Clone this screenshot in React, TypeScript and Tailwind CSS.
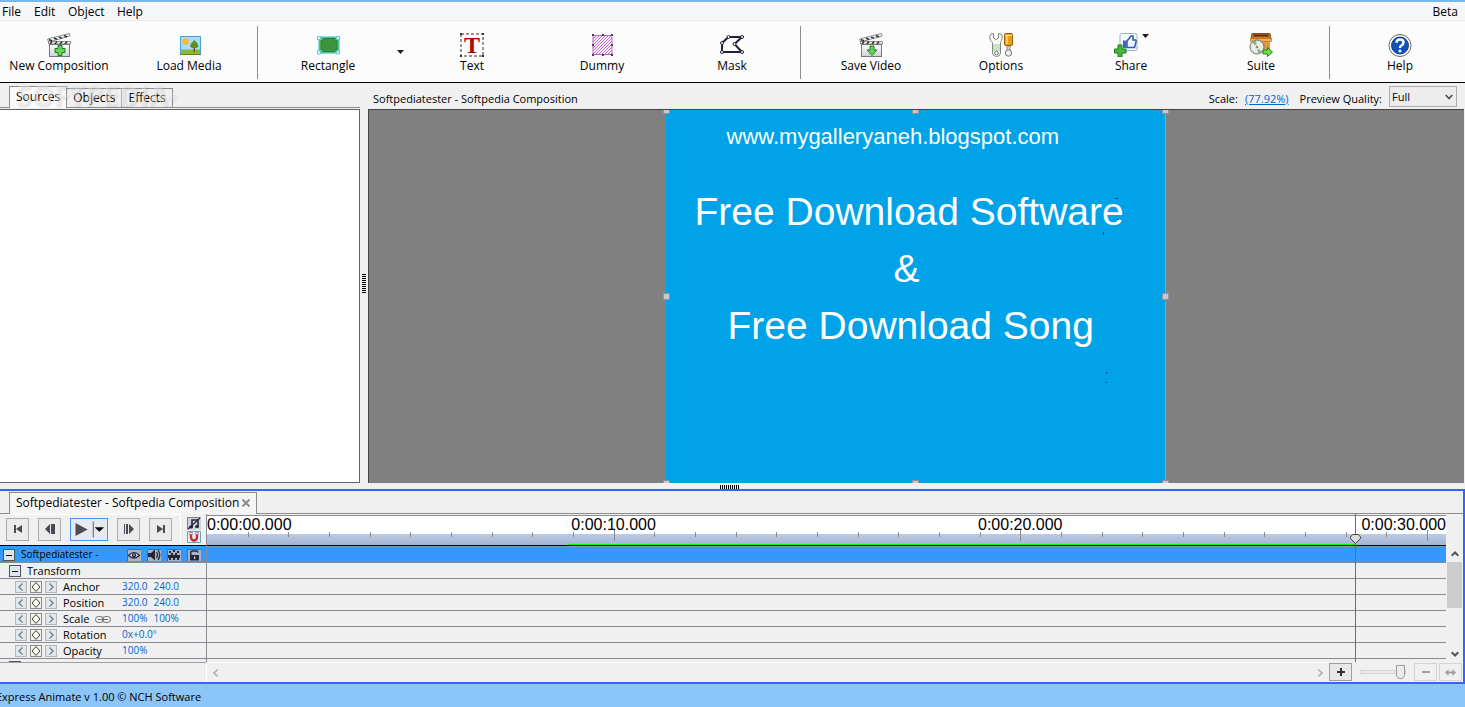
import { ReactNode, useState } from 'react'

const SECONDS_SHOWN = 30.47
const PLAYHEAD = 28.24
const RENDERED_FROM = 8.87

const properties = [
  { name: 'Anchor', values: ['320.0', '240.0'] },
  { name: 'Position', values: ['320.0', '240.0'] },
  { name: 'Scale', values: ['100%', '100%'], linked: true },
  { name: 'Rotation', values: ['0x+0.0º'] },
  { name: 'Opacity', values: ['100%'] },
]

function percent(seconds: number) {
  return (seconds / SECONDS_SHOWN) * 100 + '%'
}

export default function App() {
  return (
    <div className="flex h-screen flex-col overflow-hidden bg-[#f0f0f0] font-['Open_Sans',sans-serif] text-xs text-black">
      <MenuBar />
      <Toolbar />
      <main className="flex min-h-0 flex-1">
        <SourcesPanel />
        <div className="flex w-2 items-center justify-center">
          <Grip vertical />
        </div>
        <PreviewPanel />
      </main>
      <div className="flex h-[6px] shrink-0 items-end justify-center">
        <Grip />
      </div>
      <Timeline />
      <footer className="h-[23px] shrink-0 overflow-hidden bg-[#8cc6f9] text-[11px] leading-[26px] whitespace-nowrap">
        <p className="-ml-1">Express Animate v 1.00 © NCH Software</p>
      </footer>
    </div>
  )
}

function MenuBar() {
  return (
    <nav className="flex h-[21px] shrink-0 items-center border-t-2 border-b border-t-[#78b7ea] border-b-[#e8eaec] bg-[#f5f6f7] pt-[2px] pr-[7px] pl-[2px]">
      <button className="w-8 text-left">File</button>
      <button className="w-[34px] text-left">Edit</button>
      <button className="w-[49px] text-left">Object</button>
      <button>Help</button>
      <span className="ml-auto">Beta</span>
    </nav>
  )
}

function Toolbar() {
  return (
    <div className="flex h-[62px] shrink-0 border-b border-black bg-[#fcfcfc]">
      <Tool label="New Composition" icon={<ClapperIcon kind="add" />} first />
      <Tool label="Load Media" icon={<MediaIcon />} />
      <Separator />
      <Tool label="Rectangle" icon={<RectangleIcon />} />
      <button aria-label="More shapes" className="flex w-[14px] items-center justify-center">
        <Caret />
      </button>
      <Tool label="Text" icon={<TextIcon />} />
      <Tool label="Dummy" icon={<DummyIcon />} />
      <Tool label="Mask" icon={<MaskIcon />} />
      <Separator />
      <Tool label="Save Video" icon={<ClapperIcon kind="save" />} />
      <Tool label="Options" icon={<OptionsIcon />} />
      <Tool label="Share" icon={<ShareIcon />} />
      <Tool label="Suite" icon={<SuiteIcon />} />
      <Separator />
      <Tool label="Help" icon={<HelpIcon />} />
    </div>
  )
}

interface ToolProps {
  label: string
  icon: ReactNode
  first?: boolean
}

function Tool({ label, icon, first }: ToolProps) {
  return (
    <button
      className={
        (first ? 'w-[124px] pr-[6px]' : 'w-[130px]') +
        ' flex flex-col items-center pt-3 whitespace-nowrap'
      }
    >
      {icon}
      <span className="leading-[18px]">{label}</span>
    </button>
  )
}

function Separator() {
  return <div className="mt-[5px] mr-[5px] mb-[3px] ml-[3px] w-px bg-[#8c8c8c]" />
}

function Caret() {
  return (
    <svg width="7" height="4" viewBox="0 0 7 4">
      <path d="M0 0h7L3.5 4z" fill="#1b1b1b" />
    </svg>
  )
}

function Grip({ vertical }: { vertical?: boolean }) {
  return vertical ? (
    <div className="h-[19px] w-1 bg-[repeating-linear-gradient(to_bottom,#000_0_1px,transparent_1px_2px)]" />
  ) : (
    <div className="mr-[6px] h-[4px] w-[20px] bg-[repeating-linear-gradient(to_right,#000_0_1px,transparent_1px_2px)]" />
  )
}

function SourcesPanel() {
  const [active, setActive] = useState('Sources')

  return (
    <section className="flex w-[360px] shrink-0 flex-col">
      <div className="relative flex h-[25px] items-end border-b border-[#8c8c8c] pl-[9px]">
        {['Sources', 'Objects', 'Effects'].map((tab) => (
          <button
            key={tab}
            onClick={() => setActive(tab)}
            className={
              tab == active
                ? '-mb-px h-[22px] border border-b-0 border-[#8c8c8c] bg-[#fafafa] px-[6px] pb-px'
                : 'h-[19px] border-t border-r border-[#8c8c8c] px-[6px]'
            }
          >
            {tab}
          </button>
        ))}
        <span className="pointer-events-none absolute bottom-0 left-4 font-['Open_Sans',sans-serif] text-[28px] leading-6 font-bold text-white/40 [text-shadow:1px_1px_2px_rgba(0,0,0,0.12)]">
          SOFTPEDIA<sup className="text-[10px]">®</sup>
        </span>
      </div>
      <div className="mt-px flex-1 border border-l-0 border-[#646464] bg-white" />
    </section>
  )
}

function PreviewPanel() {
  return (
    <section className="flex min-w-0 flex-1 flex-col pr-px">
      <header className="flex h-[26px] items-end pr-[7px] pl-[5px] text-[11px] leading-5">
        <h1 className="mr-auto">Softpediatester - Softpedia Composition</h1>
        <span>Scale:</span>
        <a href="#scale" className="ml-[7px] text-[#0066cc] underline">
          (77.92%)
        </a>
        <label htmlFor="quality" className="ml-[11px]">
          Preview Quality:
        </label>
        <div className="relative mb-[2px] ml-[7px]">
          <select
            id="quality"
            className="h-[21px] w-[68px] appearance-none border border-[#acacac] bg-[#ededed] pb-px pl-[2px] text-[11px]"
          >
            <option>Full</option>
            <option>Half</option>
          </select>
          <svg className="pointer-events-none absolute top-2 right-1" width="8" height="6" viewBox="0 0 8 6">
            <path d="M0.7 1L4 4.5 7.3 1" fill="none" stroke="#555" strokeWidth="1.8" />
          </svg>
        </div>
      </header>
      <div className="flex min-h-0 flex-1 justify-center overflow-hidden border-t border-l border-[#444] bg-[#808080] pr-[2px]">
        <div className="relative -mt-px w-[500px] border-r border-[#9d9d9d] bg-[#00a2e8] font-['Liberation_Sans',sans-serif] whitespace-nowrap text-white">
          <p className="pt-3 pl-[61px] text-[22px] leading-8">www.mygalleryaneh.blogspot.com</p>
          <p className="pt-[30px] pl-[29px] text-[39px] leading-[57px]">Free Download Software</p>
          <p className="pl-[228px] text-[39px] leading-[57px]">&amp;</p>
          <p className="pl-[62px] text-[39px] leading-[57px]">Free Download Song</p>
          <Handle place="-top-[2px] -left-[3px]" />
          <Handle place="-top-[2px] left-[246px]" />
          <Handle place="-top-[2px] -right-[4px]" />
          <Handle place="top-[184px] -left-[3px]" />
          <Handle place="top-[184px] -right-[4px]" />
          <Handle place="-bottom-[4px] -left-[3px]" />
          <Handle place="-bottom-[4px] left-[246px]" />
          <Handle place="-bottom-[4px] -right-[4px]" />
          <i className="absolute top-[89px] left-[449px] h-px w-[3px] bg-[#0b3f8f]" />
          <i className="absolute top-[110px] left-[451px] h-px w-[2px] bg-[#0b3f8f]" />
          <i className="absolute top-[123px] left-[437px] h-[3px] w-px bg-[#0b3f8f]" />
          <i className="absolute top-[263px] left-[440px] h-[2px] w-px bg-[#0b3f8f]" />
          <i className="absolute top-[273px] left-[440px] h-px w-px bg-[#0b3f8f]" />
        </div>
      </div>
    </section>
  )
}

function Handle({ place }: { place: string }) {
  return <i className={place + ' absolute size-[7px] border border-[#8f93a8] bg-[#c8c8c8]'} />
}

function Timeline() {
  return (
    <section className="flex shrink-0 flex-col border-y-2 border-r-2 border-[#3264ff]">
      <div className="flex h-[23px] items-end border-b border-[#8c8c8c] pl-[9px]">
        <div className="-mb-px flex h-[22px] items-center gap-[3px] border border-b-0 border-[#8c8c8c] bg-[#f5f5f5] px-[6px] pb-px">
          <span>Softpediatester - Softpedia Composition</span>
          <button aria-label="Close tab">
            <svg width="8" height="8" viewBox="0 0 8 8">
              <path d="M0.5 0.5l7 7M7.5 0.5l-7 7" stroke="#8c8c8c" strokeWidth="2" />
            </svg>
          </button>
        </div>
      </div>

      <div className="flex h-[148px] overflow-hidden">
        <div className="w-[207px] shrink-0 border-r border-[#8a8a94]">
          <Transport />
          <LayerHeader />
          <div className="flex h-4 items-center border-b border-[#8a8a94] pt-px pl-[9px]">
            <Collapse label="Collapse transform" />
            <span className="ml-[6px] text-[11px]">Transform</span>
          </div>
          {properties.map((property) => (
            <PropertyRow key={property.name} {...property} />
          ))}
          <div className="pt-[2px] pl-[9px]">
            <Collapse label="Collapse group" />
          </div>
        </div>

        <div className="relative min-w-0 flex-1">
          <Ruler />
          <div className="h-[17px] border-b border-[#8a8a94] bg-[#3399ff] shadow-[inset_0_1px_#7a9aa8]" />
          {[1, 2, 3, 4, 5, 6].map((row) => (
            <div key={row} className="h-4 border-b border-[#8a8a94]" />
          ))}
          <div className="absolute inset-y-0 w-px bg-[#f03a1e]" style={{ left: percent(PLAYHEAD) }}>
            <svg className="absolute top-[20px] -left-[5px]" width="11" height="10" viewBox="0 0 11 10">
              <path d="M2.5 0.5h6l2 2.5v1.5l-5 5-5-5V3z" fill="#dcdcdc" stroke="#444" />
            </svg>
          </div>
        </div>

        <div className="flex w-[17px] shrink-0 flex-col items-center pt-8">
          <button aria-label="Scroll up" className="flex h-4 items-center">
            <Chevron d="M0.7 4.8L4 1.5l3.3 3.3" />
          </button>
          <div className="h-[46px] w-[15px] bg-[#cdcdcd]" />
          <button aria-label="Scroll down" className="mt-auto flex h-4 items-center">
            <Chevron d="M0.7 1.2L4 4.5l3.3-3.3" />
          </button>
        </div>
      </div>

      <div className="flex h-5 items-center">
        <div className="h-full w-[206px] shrink-0 border-t border-[#a0a0a0]" />
        <div className="flex h-full flex-1 items-center justify-between border-t border-l border-white px-[5px]">
          <button aria-label="Scroll left">
            <Arrow d="M5.5 0.7L2 4l3.5 3.3" />
          </button>
          <button aria-label="Scroll right">
            <Arrow d="M1.5 0.7L5 4 1.5 7.3" />
          </button>
        </div>
        <button
          aria-label="Zoom in"
          className="flex h-[18px] w-[23px] items-center justify-center border border-[#a0a0a0] bg-[#e8e8e8]"
        >
          <svg width="8" height="8" viewBox="0 0 8 8">
            <path d="M4 0v8M0 4h8" stroke="#333" strokeWidth="2" />
          </svg>
        </button>
        <input
          type="range"
          aria-label="Timeline zoom"
          defaultValue={100}
          className="mx-2 h-[14px] w-[46px] appearance-none bg-transparent [&::-webkit-slider-runnable-track]:h-1 [&::-webkit-slider-runnable-track]:border [&::-webkit-slider-runnable-track]:border-[#d0d4d2] [&::-webkit-slider-runnable-track]:bg-[#e7eaea] [&::-webkit-slider-thumb]:-mt-[6px] [&::-webkit-slider-thumb]:h-[14px] [&::-webkit-slider-thumb]:w-[9px] [&::-webkit-slider-thumb]:appearance-none [&::-webkit-slider-thumb]:rounded-b-[4px] [&::-webkit-slider-thumb]:border [&::-webkit-slider-thumb]:border-[#9a9a9a] [&::-webkit-slider-thumb]:bg-[#ececec]"
        />
        <button
          aria-label="Zoom out"
          className="flex h-[18px] w-[23px] items-center justify-center border border-[#d4d4d4]"
        >
          <svg width="8" height="2" viewBox="0 0 8 2">
            <path d="M0 0h8v2H0z" fill="#a0a0a0" />
          </svg>
        </button>
        <button
          aria-label="Fit timeline"
          className="mr-px ml-[2px] flex h-[18px] w-[23px] items-center justify-center border border-[#d4d4d4]"
        >
          <svg width="11" height="7" viewBox="0 0 11 7">
            <path d="M0 3.5L3.5 0v2.5h4V0L11 3.5 7.5 7V4.5h-4V7z" fill="#a0a0a0" />
          </svg>
        </button>
      </div>
    </section>
  )
}

function Chevron({ d }: { d: string }) {
  return (
    <svg width="8" height="6" viewBox="0 0 8 6">
      <path d={d} fill="none" stroke="#555" strokeWidth="2" />
    </svg>
  )
}

function Arrow({ d }: { d: string }) {
  return (
    <svg width="7" height="8" viewBox="0 0 7 8">
      <path d={d} fill="none" stroke="#b4b4b4" strokeWidth="1.8" />
    </svg>
  )
}

function Transport() {
  return (
    <div className="flex h-8 items-center border-b border-black pl-[6px]">
      <div className="flex h-full flex-1 items-center gap-[9px] border-t border-r border-white pb-[2px]">
        <TransportButton label="Go to start">
          <path d="M1 1h2v8H1zM9 1v8L3 5z" />
        </TransportButton>
        <TransportButton label="Previous frame">
          <path d="M5 0v10L0 5zM6 0h4v10H6z" />
        </TransportButton>
        <button
          aria-label="Play"
          className="flex h-[23px] w-[38px] items-center justify-between border border-[#3c9bf0] bg-[#e6eaee] pr-[2px] pl-1"
        >
          <svg width="32" height="17" viewBox="0 0 32 17">
            <path d="M0.5 1.5l13 7-13 7z" fill="#4d4d58" />
            <path d="M19.5 0v17" stroke="#555" />
            <path d="M21 6h10l-5 5z" fill="#000" />
          </svg>
        </button>
        <TransportButton label="Next frame">
          <path d="M5 0v10l5-5zM2 0h2v10H2zM0 0h1v10H0z" />
        </TransportButton>
        <TransportButton label="Go to end">
          <path d="M7 1h2v8H7zM1 1v8l6-4z" />
        </TransportButton>
      </div>
      <div className="flex w-[25px] flex-col items-center gap-px">
        <button aria-label="Mute scrubbing">
          <svg width="14" height="13" viewBox="0 0 14 13">
            <path d="M0 0h14v13H0z" fill="#cdd3d8" />
            <path d="M0.5 12.5V0.5h13" stroke="#7b8187" fill="none" />
            <path d="M5 10V3h6v6" stroke="#24243a" strokeWidth="1.6" fill="none" />
            <ellipse cx="4" cy="10" rx="2" ry="1.5" fill="#24243a" />
            <ellipse cx="10" cy="9.5" rx="2" ry="1.5" fill="#24243a" />
            <path d="M1 12L13 1" stroke="#24243a" strokeWidth="1.2" />
          </svg>
        </button>
        <button aria-label="Snap">
          <svg width="14" height="12" viewBox="0 0 14 12">
            <path d="M0.5 0.5h13v11H0.5z" fill="#dcf1fa" stroke="#6a9fc0" />
            <path d="M4 3v3.500a3 3 0 0 0 6 0V3" fill="none" stroke="#d02a2a" strokeWidth="2.4" />
            <path d="M2.8 1.500h2.4v2H2.8zM8.800 1.500h2.4v2H8.800z" fill="#fff" stroke="#a04848" strokeWidth="0.6" />
          </svg>
        </button>
      </div>
    </div>
  )
}

function TransportButton({ label, children }: { label: string; children: ReactNode }) {
  return (
    <button
      aria-label={label}
      className="flex h-[23px] w-[23px] items-center justify-center border border-[#acacac] bg-[#ebebeb]"
    >
      <svg width="10" height="10" viewBox="0 0 10 10" fill="#4a4a55">
        {children}
      </svg>
    </button>
  )
}

function LayerHeader() {
  return (
    <div className="flex h-[17px] items-center border-b border-[#8a8a94] bg-[#3399ff] pt-[2px] pl-[3px]">
      <Collapse label="Collapse layer" />
      <span className="ml-[6px] text-[10px]">Softpediatester -</span>
      <div className="mr-[5px] ml-auto flex gap-[6px]">
        <LayerButton label="Visible">
          <path d="M1.500 6.500Q7 0.500 12.500 6.500 7 11.500 1.500 6.500z" fill="#d5dde6" stroke="#24243a" strokeWidth="1.200" />
          <circle cx="7" cy="6.200" r="2.100" fill="#24243a" />
          <circle cx="7" cy="6" r="0.800" fill="#d5dde6" />
        </LayerButton>
        <LayerButton label="Audio">
          <path d="M1 4h3l4-3.5v11L4 8H1z" fill="#24243a" />
          <path d="M9.5 3q2 3 0 6M11 1q3.5 5 0 10" fill="none" stroke="#24243a" strokeWidth="1.3" />
        </LayerButton>
        <LayerButton label="Motion">
          <path
            d="M2 2h2v2H2zM6 1h2v2H6zM10 2h2v2h-2zM4 4h2v2H4zM8 4h2v2H8zM1 6h12v3H1zM2 9h2v2H2zM6 9h2v2H6zM10 9h2v2h-2z"
            fill="#24243a"
          />
        </LayerButton>
        <LayerButton label="Lock">
          <path d="M3 6h9v5.500H3z" fill="#24243a" />
          <path d="M3.700 6V3.500q0-1.500 1.500-1.500h4q1.500 0 1.500 1.500" fill="none" stroke="#24243a" strokeWidth="1.500" />
          <path d="M7 7.500h1.200v2.500H7z" fill="#d5dde6" />
        </LayerButton>
      </div>
    </div>
  )
}

function LayerButton({ label, children }: { label: string; children: ReactNode }) {
  return (
    <button aria-label={label}>
      <svg width="14" height="12" viewBox="0 0 14 12">
        <path d="M0 0h14v12H0z" fill="#a9b4c2" />
        <path d="M0.500 12V0.500H14" fill="none" stroke="#5c6677" />
        {children}
      </svg>
    </button>
  )
}

function Collapse({ label }: { label: string }) {
  return (
    <button
      aria-label={label}
      className="flex size-3 shrink-0 items-center justify-center border border-[#4a5560] bg-[#dde6ec]"
    >
      <span className="h-px w-[6px] bg-black" />
    </button>
  )
}

interface PropertyRowProps {
  name: string
  values: string[]
  linked?: boolean
}

function PropertyRow({ name, values, linked }: PropertyRowProps) {
  return (
    <div className="flex h-4 items-center border-b border-[#8a8a94] pt-px pl-[15px] text-[11px]">
      <div className="flex gap-[3px]">
        <KeyButton label={'Previous ' + name + ' keyframe'} d="M7.500 2.500L4 6l3.500 3.500" />
        <KeyButton label={'Toggle ' + name + ' keyframe'} d="M6 1.500L10 6 6 10.500 2 6z" dark />
        <KeyButton label={'Next ' + name + ' keyframe'} d="M4.500 2.500L8 6 4.500 9.500" />
      </div>
      <div className="ml-[6px] flex w-[59px] items-center gap-[6px]">
        {name}
        {linked && (
          <svg width="16" height="7" viewBox="0 0 16 7" fill="none" stroke="#6e6e6e">
            <rect x="0.500" y="0.500" width="8" height="6" rx="3" />
            <rect x="7.500" y="0.500" width="8" height="6" rx="3" />
            <path d="M3 3.500h10" />
          </svg>
        )}
      </div>
      <div className="flex gap-[6px] text-[10px] text-[#0066cc]">
        {values.map((value, index) => (
          <span key={index}>{value}</span>
        ))}
      </div>
    </div>
  )
}

function KeyButton({ label, d, dark }: { label: string; d: string; dark?: boolean }) {
  return (
    <button aria-label={label}>
      <svg width="12" height="12" viewBox="0 0 12 12">
        <rect x="0.500" y="0.500" width="11" height="11" fill={dark ? '#f4f4ee' : '#e0e8ec'} stroke={dark ? '#8a8a8a' : '#b0b8bc'} />
        <path d={d} fill="none" stroke={dark ? '#444' : '#78828a'} strokeWidth={dark ? '1' : '1.400'} />
      </svg>
    </button>
  )
}

function Ruler() {
  const ticks = Array.from({ length: 30 }, (_, index) => index + 1)

  return (
    <div className="relative h-8 overflow-hidden border-b border-black bg-[#f0f0f0] pt-px font-['Liberation_Sans',sans-serif] text-base leading-[18px]">
      <div className="h-[19px] border-t border-[#8c8c8c] bg-white" />
      <div className="h-[11px] bg-linear-to-b from-[#bccae2] to-[#a3b5d6]" />
      {ticks.map((second) => (
        <i
          key={second}
          className={
            second % 10 == 0
              ? 'absolute top-4 h-[11px] w-px bg-[#8c8c8c]'
              : 'absolute top-[18px] h-[5px] w-px bg-[#8c8c8c]'
          }
          style={{ left: percent(second) }}
        />
      ))}
      <div
        className="absolute bottom-0 h-px bg-[#00ff00]"
        style={{ left: percent(RENDERED_FROM), width: percent(PLAYHEAD - RENDERED_FROM) }}
      />
      <span className="absolute top-[2px] left-0">0:00:00.000</span>
      <span className="absolute top-[2px] -translate-x-1/2" style={{ left: percent(10) }}>
        0:00:10.000
      </span>
      <span className="absolute top-[2px] -translate-x-1/2" style={{ left: percent(20) }}>
        0:00:20.000
      </span>
      <span className="absolute top-[2px] right-0">0:00:30.000</span>
    </div>
  )
}

function Icon({ children }: { children: ReactNode }) {
  return (
    <svg width="24" height="24" viewBox="0 0 24 24" className="shrink-0">
      {children}
    </svg>
  )
}

function ClapperIcon({ kind }: { kind: 'add' | 'save' }) {
  return (
    <Icon>
      <defs>
        <linearGradient id={'slate-' + kind} x2="0" y2="1">
          <stop offset="0" stopColor="#fff" />
          <stop offset="1" stopColor="#cfcfd6" />
        </linearGradient>
      </defs>
      <path d="M0.500 6L22.500 0.500l0.500 2.500L1.500 9z" fill="#f4f4f4" stroke="#777" strokeWidth="0.800" />
      <path d="M2 6.500l3 1.500M7 5l3 1.500M12 3.800l3 1.500M17 2.500l3 1.500" stroke="#333" strokeWidth="1.500" />
      <path d="M1.500 8.500h22v2.500h-22z" fill="#f4f4f4" stroke="#777" strokeWidth="0.800" />
      <path d="M3 11l2-2.500M8 11l2-2.500M13 11l2-2.500M18 11l2-2.500" stroke="#333" strokeWidth="1.500" />
      <rect x="2.500" y="11.500" width="20" height="12" fill={'url(#slate-' + kind + ')'} stroke="#777" />
      {kind == 'add' ? (
        <path d="M11 12.500h4v3h3v4h-3v3h-4v-3H8v-4h3z" fill="#63d455" stroke="#1c7f22" />
      ) : (
        <path d="M11 13h4v4h3l-5 5.500L8 17h3z" fill="#63d455" stroke="#1c7f22" />
      )}
    </Icon>
  )
}

function MediaIcon() {
  return (
    <Icon>
      <path d="M3.500 3.500h20v18h-20z" fill="#aadcf8" stroke="#4a9fd8" />
      <path d="M4 16.500h19V21H4z" fill="#8fb83a" />
      <path d="M3 21h21v1H3z" fill="#5c8520" />
      <circle cx="8.500" cy="8.500" r="3.200" fill="#ffb820" />
      <path d="M16.500 13h1.500v6h-1.500z" fill="#7a4a1c" />
      <path d="M17.500 7l3 3.500 1 3-2 1.500h-4.500l-2-1.500 1-3z" fill="#5f8f20" />
    </Icon>
  )
}

function RectangleIcon() {
  return (
    <Icon>
      <path d="M3 4h20v16H3z" fill="#62c664" stroke="#3cb8cc" />
      <path d="M7 5.500h12v2h2v9h-2v2H7v-2H5v-9h2z" fill="#3f9440" stroke="#2a8038" />
      <path d="M1.500 3.500h3v3h-3zM20.500 3.500h3v3h-3zM1.500 18h3v3h-3zM20.500 18h3v3h-3z" fill="#e4fbff" stroke="#5ccbd8" />
    </Icon>
  )
}

function TextIcon() {
  return (
    <Icon>
      <rect x="1" y="1" width="22" height="22" fill="none" stroke="#333" strokeDasharray="3 2" />
      <path d="M0 0h2v2H0zM22 0h2v2h-2zM0 22h2v2H0zM22 22h2v2h-2z" fill="#333" />
      <text
        x="12"
        y="20"
        textAnchor="middle"
        fontFamily="Liberation Serif, serif"
        fontWeight="bold"
        fontSize="24"
        fill="#a80808"
      >
        T
      </text>
    </Icon>
  )
}

function DummyIcon() {
  return (
    <Icon>
      <defs>
        <pattern id="hatch" width="3" height="3" patternUnits="userSpaceOnUse">
          <path d="M-1 1l2-2M0 3l3-3M2 4l2-2" stroke="#c050c8" strokeWidth="0.900" />
        </pattern>
      </defs>
      <rect x="3" y="2.500" width="19" height="19" fill="url(#hatch)" stroke="#c85fd0" />
      <path
        d="M2 1h2v2H2zM12 1h2v2h-2zM21 1h2v2h-2zM2 11h2v2H2zM21 11h2v2h-2zM2 21h2v2H2zM12 21h2v2h-2zM21 21h2v2h-2z"
        fill="#444"
      />
    </Icon>
  )
}

function MaskIcon() {
  return (
    <Icon>
      <path d="M8.500 4H22l-7.500 7L22 19H2v-9z" fill="none" stroke="#24203c" strokeWidth="2" />
      <g fill="#fff" stroke="#24203c">
        <circle cx="8.500" cy="4" r="1.500" />
        <circle cx="22" cy="4" r="1.500" />
        <circle cx="14.500" cy="11" r="1.500" />
        <circle cx="2" cy="10" r="1.500" />
        <circle cx="2" cy="19" r="1.500" />
        <circle cx="22" cy="19" r="1.500" />
      </g>
    </Icon>
  )
}

function OptionsIcon() {
  return (
    <Icon>
      <path
        d="M4.500 0.500L2 1Q-0.500 4 1.500 7.500l2 2V20q0.500 3.500 4 3.500t4-3.500V9.500l1-2q2-3.500-0.500-6.500L9.500 0.500V5L7 6.500 4.500 5z"
        fill="#fafaf4"
        stroke="#808880"
      />
      <path d="M4 11h7v7H4z" fill="#c4e2c4" />
      <circle cx="7.500" cy="20" r="1.800" fill="#fff" stroke="#777" />
      <rect x="15.500" y="0.500" width="8" height="12" rx="1.500" fill="#e8a010" stroke="#a85808" />
      <path d="M16 2.500h7" stroke="#fff0b0" />
      <path d="M18 3v8" stroke="#f8d060" strokeWidth="2" />
      <path d="M18 13h3v5h-3z" fill="#ddd" stroke="#777" strokeWidth="0.800" />
      <circle cx="19.500" cy="20" r="3.200" fill="#e8f2ea" stroke="#777" />
    </Icon>
  )
}

function ShareIcon() {
  return (
    <span className="relative mr-[10px]">
      <Icon>
        <rect x="6" y="0.500" width="17" height="17" rx="1.500" fill="#f6f9fd" stroke="#a0b4bc" />
        <path
          d="M13 8l4-5h2v4h2.500q1 0.500 0.500 2l-1.500 5.500H13z"
          fill="#f0f6ff"
          stroke="#2f57b8"
          strokeWidth="1.500"
        />
        <path d="M9 7.500h3.500V15H9z" fill="#3c66c4" />
        <path d="M4 12h4v4h4v4H8v4H4v-4H0.500v-4H4z" fill="#48b83a" stroke="#177a18" />
      </Icon>
      <span className="absolute top-[1px] -right-[11px] flex">
        <Caret />
      </span>
    </span>
  )
}

function SuiteIcon() {
  return (
    <Icon>
      <path d="M3 0.500h18l1 6.500H2z" fill="#c87a20" stroke="#8a4c10" />
      <path d="M4.500 2.500h15" stroke="#5a2c08" strokeWidth="2" />
      <path d="M4 7h17v13H4z" fill="#e09840" />
      <path d="M1.500 5.500h21v3h-21z" fill="#eeb060" stroke="#b06818" strokeWidth="0.600" />
      <circle cx="8" cy="14" r="7" fill="#e4ece4" stroke="#6c746c" />
      <path d="M8 14L3 9.500A7 7 0 0 1 7 7.500zM8 14l5 5a7 7 0 0 1-4 1.800z" fill="#8cae90" />
      <circle cx="8" cy="14" r="2" fill="#c08030" stroke="#fff" />
      <path d="M14 17h4.500v-2.500l5 4.500-5 4.500V21H14z" fill="#6be04a" stroke="#238a18" />
    </Icon>
  )
}

function HelpIcon() {
  return (
    <Icon>
      <circle cx="12" cy="12.500" r="11" fill="#fff" stroke="#555" strokeWidth="0.900" />
      <circle cx="12" cy="12.500" r="8.500" fill="#0f55b8" stroke="#123a80" />
      <path d="M8.500 9.800q0-3.300 3.500-3.300t3.500 3q0 1.800-1.800 2.700-1.700 0.900-1.700 2.800" fill="none" stroke="#fff" strokeWidth="2.400" />
      <circle cx="12" cy="18" r="1.500" fill="#fff" />
    </Icon>
  )
}
